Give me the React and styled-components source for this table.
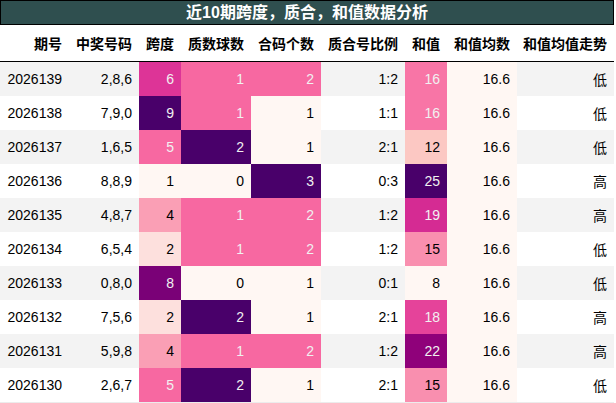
import styled, { createGlobalStyle } from 'styled-components';

const GlobalStyle = createGlobalStyle`
html, body {
  margin: 0;
  padding: 0;
  background: #ffffff;
}
body {
  font-family: 'Liberation Sans', 'Noto Sans CJK SC', sans-serif;
}
`;

// RdPu stops, same as the matplotlib map
const STOPS = ['#fff7f3', '#fde0dd', '#fcc5c0', '#fa9fb5', '#f768a1', '#dd3497', '#ae017e', '#7a0177', '#49006a'];

const hex = (h) => [1, 3, 5].map((i) => parseInt(h.slice(i, i + 2), 16));

function rdpu(t) {
  const p = Math.max(0, Math.min(1, t)) * (STOPS.length - 1);
  const i = Math.min(Math.floor(p), STOPS.length - 2);
  const f = p - i;
  const a = hex(STOPS[i]);
  const b = hex(STOPS[i + 1]);
  return a.map((v, k) => Math.round(v + (b[k] - v) * f));
}

function shade(value, min, max) {
  const t = max === min ? 0 : (value - min) / (max - min);
  const [r, g, b] = rdpu(t);
  const lum = [r, g, b].map((c) => {
    const x = c / 255;
    return x <= 0.03928 ? x / 12.92 : Math.pow((x + 0.055) / 1.055, 2.4);
  });
  const L = 0.2126 * lum[0] + 0.7152 * lum[1] + 0.0722 * lum[2];
  return { bg: `rgb(${r},${g},${b})`, fg: L < 0.408 ? '#f1f1f1' : '#000000' };
}

const rows = [
  ['2026139', '2,8,6', 6, 1, 2, '1:2', 16, '16.6', '低'],
  ['2026138', '7,9,0', 9, 1, 1, '1:1', 16, '16.6', '低'],
  ['2026137', '1,6,5', 5, 2, 1, '2:1', 12, '16.6', '低'],
  ['2026136', '8,8,9', 1, 0, 3, '0:3', 25, '16.6', '高'],
  ['2026135', '4,8,7', 4, 1, 2, '1:2', 19, '16.6', '高'],
  ['2026134', '6,5,4', 2, 1, 2, '1:2', 15, '16.6', '低'],
  ['2026133', '0,8,0', 8, 0, 1, '0:1', 8, '16.6', '低'],
  ['2026132', '7,5,6', 2, 2, 1, '2:1', 18, '16.6', '高'],
  ['2026131', '5,9,8', 4, 1, 2, '1:2', 22, '16.6', '高'],
  ['2026130', '2,6,7', 5, 2, 1, '2:1', 15, '16.6', '低'],
];

const columns = [
  { title: '期号', width: 69 },
  { title: '中奖号码', width: 70 },
  { title: '跨度', width: 42, heat: true },
  { title: '质数球数', width: 70, heat: true },
  { title: '合码个数', width: 70, heat: true },
  { title: '质合号比例', width: 84 },
  { title: '和值', width: 42, heat: true },
  { title: '和值均数', width: 70, heat: true },
  { title: '和值均值走势', width: 97 },
];

const Wrapper = styled.div`
width: 614px;
`;

const Title = styled.div`
height: 23px;
border: 1px solid #000000;
background: #2f4f4f;
color: #ffffff;
font-family: 'Liberation Sans', 'Noto Sans CJK SC', sans-serif;
font-weight: 700;
font-size: 16px;
line-height: 23px;
text-align: center;
`;

const Table = styled.table`
width: 614px;
border-collapse: collapse;
table-layout: fixed;
font-size: 14px;
border-bottom: 1px solid #ececec;
`;

const HeadCell = styled.th`
height: 36px;
padding: 0 7px 0 0;
text-align: right;
font-weight: 700;
font-size: 14px;
color: #000000;
background: #ffffff;
border-bottom: 1px solid #000000;
white-space: nowrap;
`;

const Row = styled.tr`
background: ${(p) => (p.$striped ? '#f3f3f3' : '#ffffff')};
`;

const Cell = styled.td`
height: 34px;
padding: 0 7px 0 0;
text-align: right;
color: ${(p) => p.$fg || '#000000'};
background: ${(p) => p.$bg || 'transparent'};
white-space: nowrap;
`;

function App() {
  const ranges = columns.map((c, i) => {
    if (!c.heat) return null;
    const vals = rows.map((r) => parseFloat(r[i]));
    return [Math.min(...vals), Math.max(...vals)];
  });

  return (
    <Wrapper>
      <GlobalStyle />
      <Title>近10期跨度，质合，和值数据分析</Title>
      <Table>
        <colgroup>
          {columns.map((c) => (
            <col key={c.title} style={{ width: c.width }} />
          ))}
        </colgroup>
        <thead>
          <tr>
            {columns.map((c) => (
              <HeadCell key={c.title}>{c.title}</HeadCell>
            ))}
          </tr>
        </thead>
        <tbody>
          {rows.map((r, ri) => (
            <Row key={r[0]} $striped={ri % 2 === 0}>
              {r.map((v, ci) => {
                if (!ranges[ci]) return <Cell key={ci}>{v}</Cell>;
                const s = shade(parseFloat(v), ranges[ci][0], ranges[ci][1]);
                return (
                  <Cell key={ci} $bg={s.bg} $fg={s.fg}>
                    {v}
                  </Cell>
                );
              })}
            </Row>
          ))}
        </tbody>
      </Table>
    </Wrapper>
  );
}

export default App;
